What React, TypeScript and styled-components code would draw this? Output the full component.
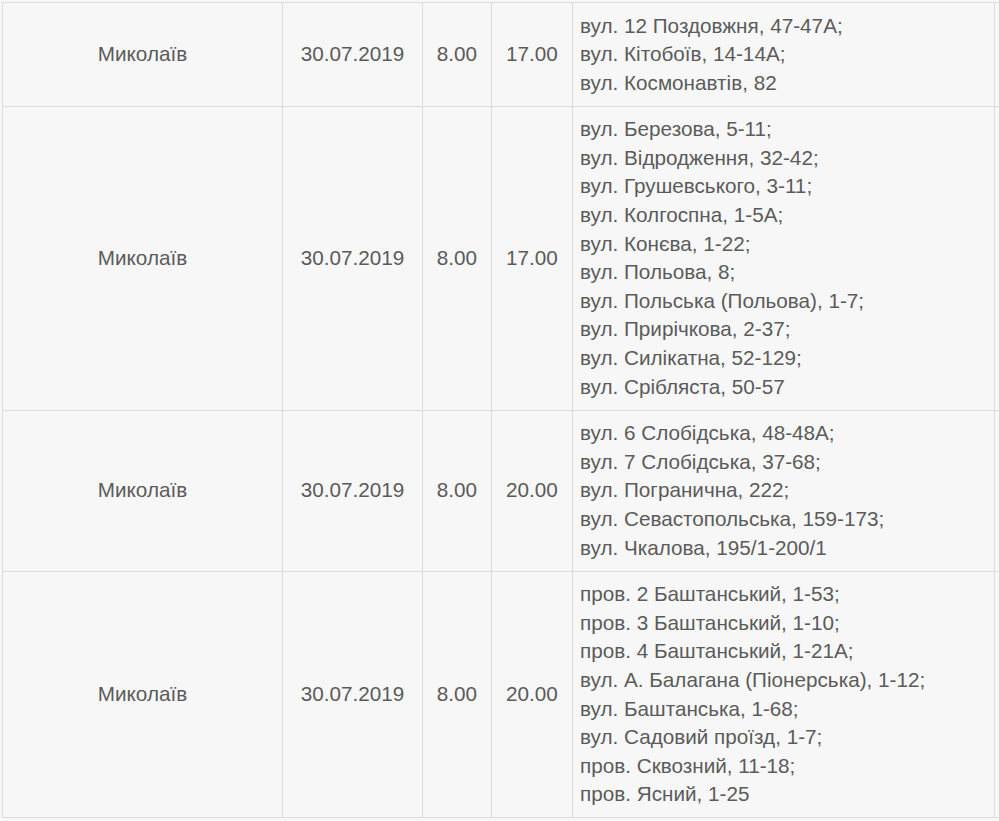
import React from 'react';
import styled, { createGlobalStyle } from 'styled-components';

const Global = createGlobalStyle`
    html, body {
        margin: 0;
        padding: 0;
        background: #f7f7f7;
        overflow: hidden;
    }
`;

const Page = styled.div`
    width: 999px;
    height: 821px;
    overflow: hidden;
    padding: 2px 0 0 2px;
    box-sizing: border-box;
`;

const Table = styled.table`
    border-collapse: collapse;
    table-layout: fixed;
    width: 1012px;
    font-family: 'Liberation Sans', Arial, sans-serif;
    font-size: 20.7px;
    color: #5b5b5b;
    background: #f7f7f7;
`;

const Col = styled.col<{ $w: number }>`
    width: ${(p) => p.$w}px;
`;

const Cell = styled.td<{ $left?: boolean }>`
    border: 1px solid #dcdcdc;
    padding: 8.5px 7px;
    line-height: 28.6px;
    vertical-align: middle;
    text-align: ${(p) => (p.$left ? 'left' : 'center')};
    white-space: nowrap;
`;

const Street = styled.div`
    display: block;
`;

type Row = {
    city: string;
    date: string;
    from: string;
    to: string;
    streets: string[];
};

const rows: Row[] = [
    {
        city: 'Миколаїв',
        date: '30.07.2019',
        from: '8.00',
        to: '17.00',
        streets: ['вул. 12 Поздовжня, 47-47А;', 'вул. Кітобоїв, 14-14А;', 'вул. Космонавтів, 82'],
    },
    {
        city: 'Миколаїв',
        date: '30.07.2019',
        from: '8.00',
        to: '17.00',
        streets: [
            'вул. Березова, 5-11;',
            'вул. Відродження, 32-42;',
            'вул. Грушевського, 3-11;',
            'вул. Колгоспна, 1-5А;',
            'вул. Конєва, 1-22;',
            'вул. Польова, 8;',
            'вул. Польська (Польова), 1-7;',
            'вул. Прирічкова, 2-37;',
            'вул. Силікатна, 52-129;',
            'вул. Срібляста, 50-57',
        ],
    },
    {
        city: 'Миколаїв',
        date: '30.07.2019',
        from: '8.00',
        to: '20.00',
        streets: [
            'вул. 6 Слобідська, 48-48А;',
            'вул. 7 Слобідська, 37-68;',
            'вул. Погранична, 222;',
            'вул. Севастопольська, 159-173;',
            'вул. Чкалова, 195/1-200/1',
        ],
    },
    {
        city: 'Миколаїв',
        date: '30.07.2019',
        from: '8.00',
        to: '20.00',
        streets: [
            'пров. 2 Баштанський, 1-53;',
            'пров. 3 Баштанський, 1-10;',
            'пров. 4 Баштанський, 1-21А;',
            'вул. А. Балагана (Піонерська), 1-12;',
            'вул. Баштанська, 1-68;',
            'вул. Садовий проїзд, 1-7;',
            'пров. Сквозний, 11-18;',
            'пров. Ясний, 1-25',
        ],
    },
];

const App = () => {
    return (
        <Page>
            <Global />
            <Table>
                <colgroup>
                    <Col $w={280} />
                    <Col $w={140} />
                    <Col $w={69} />
                    <Col $w={81} />
                    <Col $w={422} />
                    <Col $w={20} />
                </colgroup>
                <tbody>
                    {rows.map((r, i) => (
                        <tr key={i}>
                            <Cell>{r.city}</Cell>
                            <Cell>{r.date}</Cell>
                            <Cell>{r.from}</Cell>
                            <Cell>{r.to}</Cell>
                            <Cell $left>
                                {r.streets.map((s, j) => (
                                    <Street key={j}>{s}</Street>
                                ))}
                            </Cell>
                            <Cell />
                        </tr>
                    ))}
                </tbody>
            </Table>
        </Page>
    );
};

export default App;
